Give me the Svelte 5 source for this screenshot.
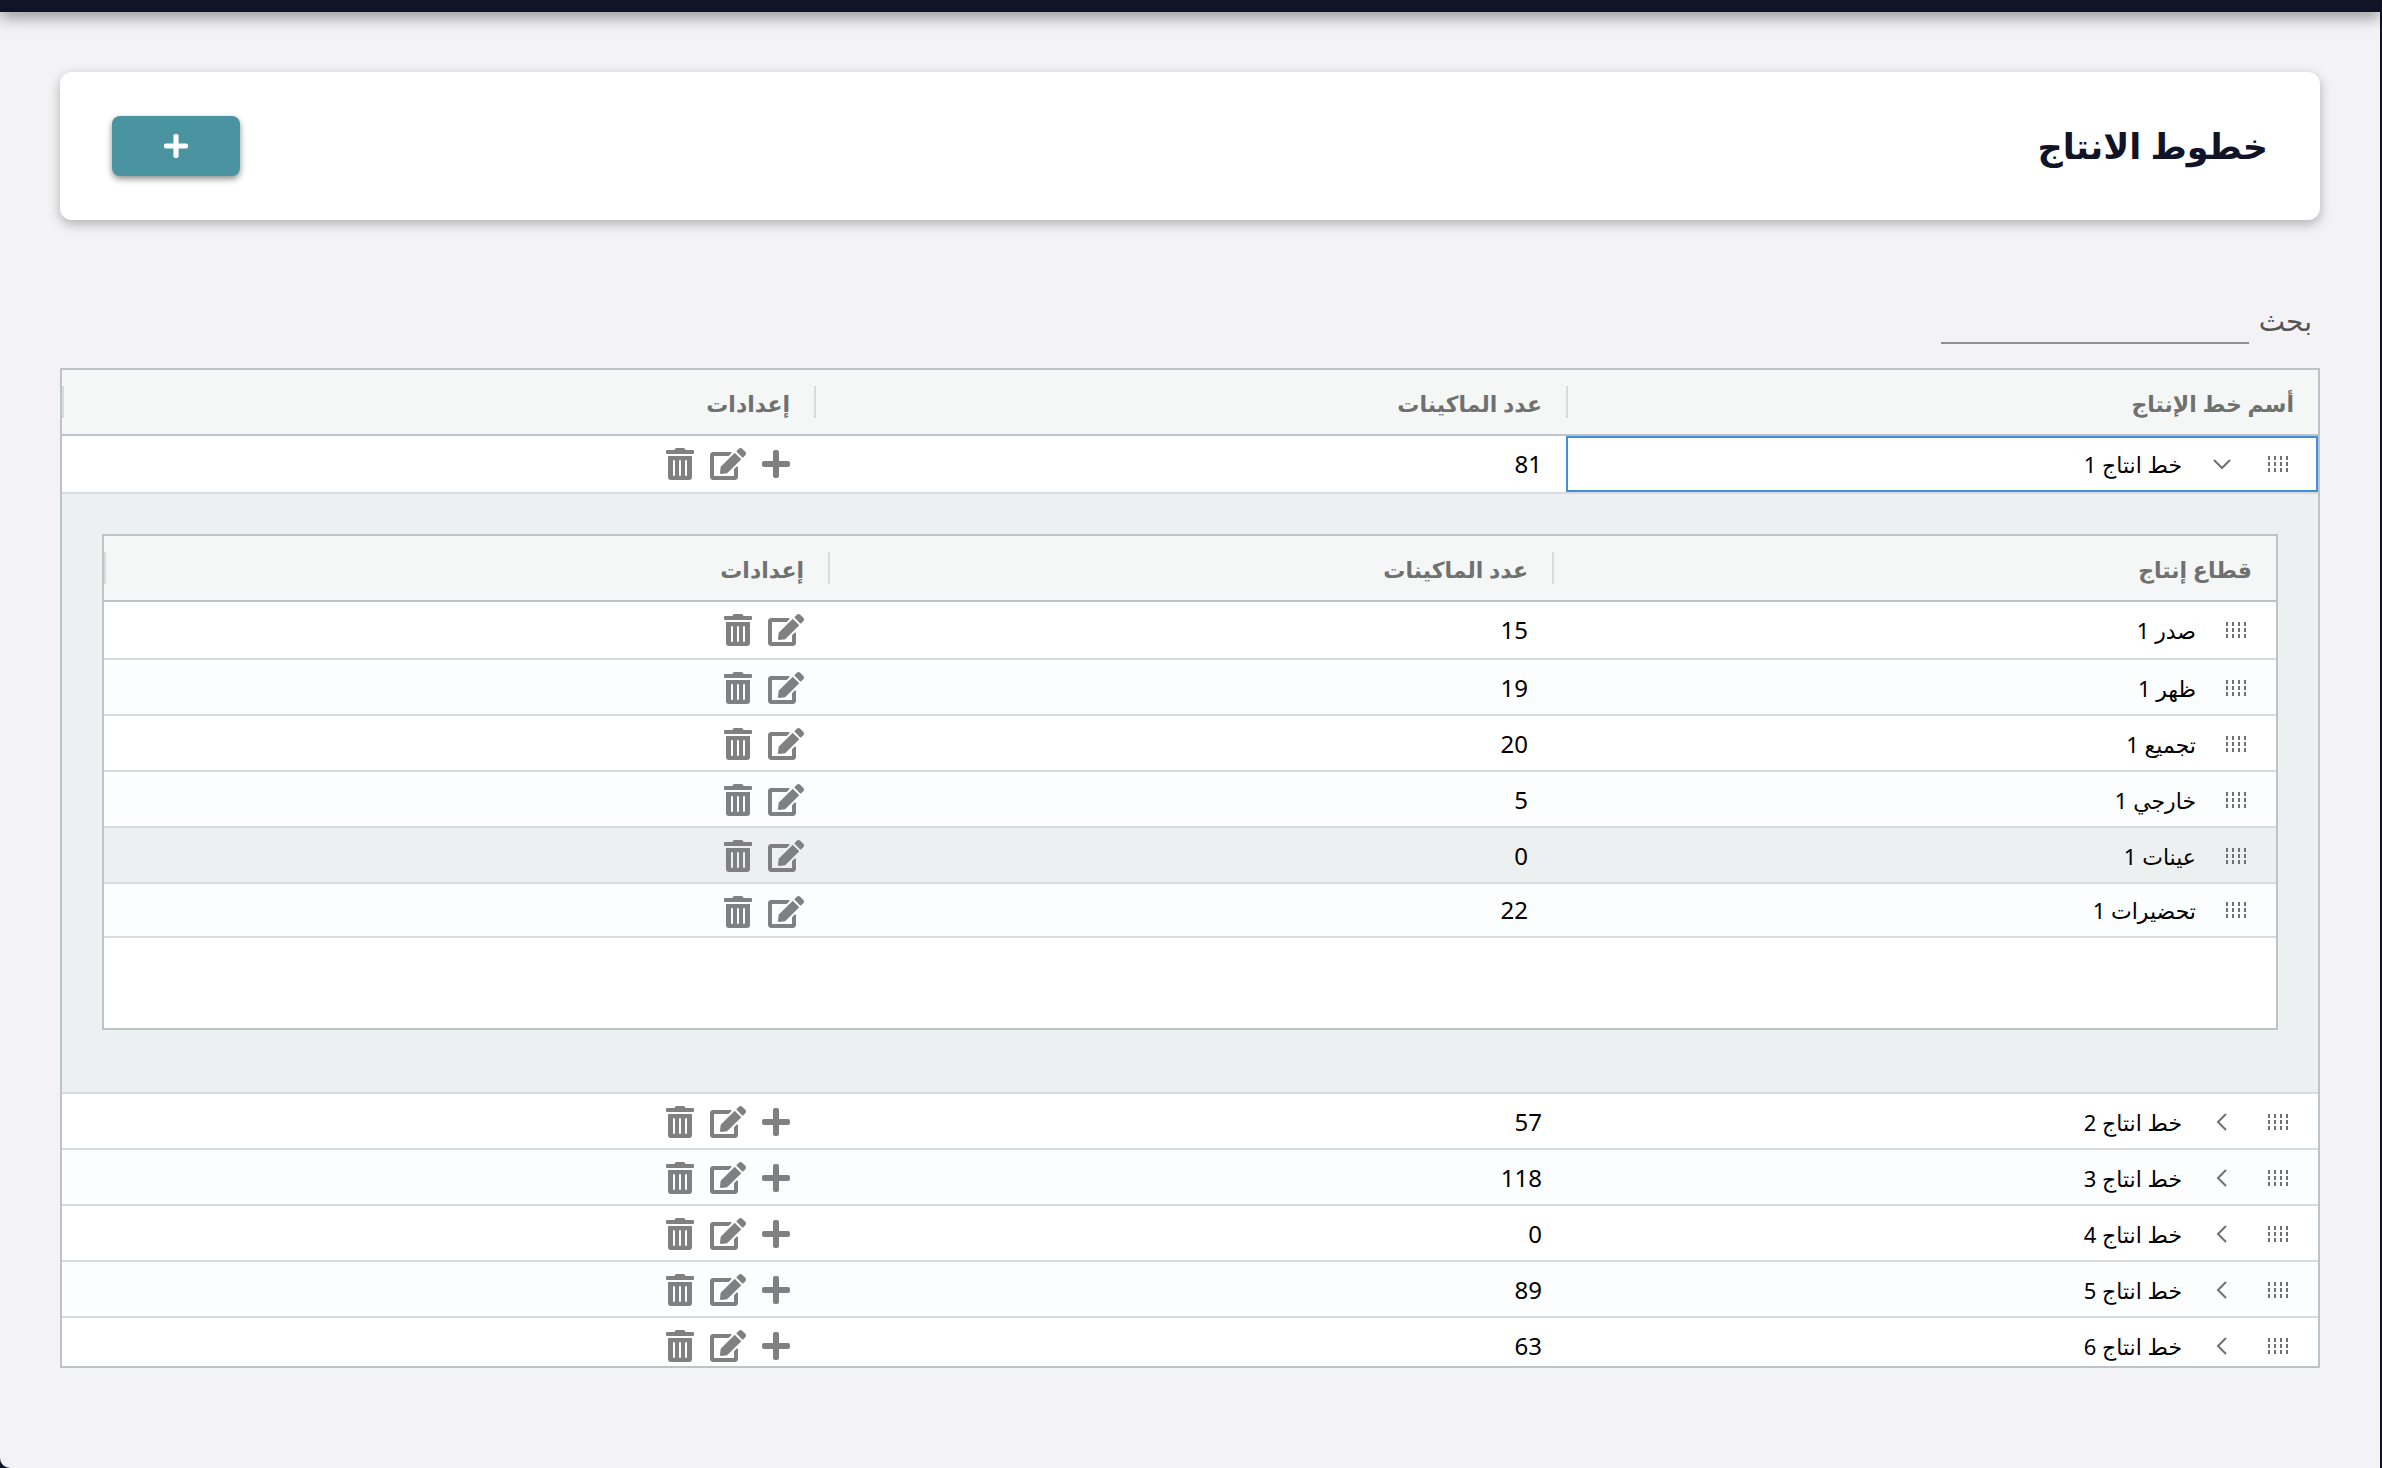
<script>
    let search = '';

    const lines = [
        { id: 1, name: 'خط انتاج 1', machines: 81, open: true, focused: true },
        { id: 2, name: 'خط انتاج 2', machines: 57 },
        { id: 3, name: 'خط انتاج 3', machines: 118 },
        { id: 4, name: 'خط انتاج 4', machines: 0 },
        { id: 5, name: 'خط انتاج 5', machines: 89 },
        { id: 6, name: 'خط انتاج 6', machines: 63 }
    ];

    const sectors = [
        { name: 'صدر 1', machines: 15 },
        { name: 'ظهر 1', machines: 19 },
        { name: 'تجميع 1', machines: 20 },
        { name: 'خارجي 1', machines: 5 },
        { name: 'عينات 1', machines: 0, hover: true },
        { name: 'تحضيرات 1', machines: 22 }
    ];

    const lineColumns = ['أسم خط الإنتاج', 'عدد الماكينات', 'إعدادات'];
    const sectorColumns = ['قطاع إنتاج', 'عدد الماكينات', 'إعدادات'];

    // Icon shapes, all 512 units high
    const icons = {
        plus: {
            width: 448,
            path: 'M416 208H272V64c0-17.67-14.33-32-32-32h-32c-17.67 0-32 14.33-32 32v144H32c-17.67 0-32 14.33-32 32v32c0 17.67 14.33 32 32 32h144v144c0 17.67 14.33 32 32 32h32c17.67 0 32-14.33 32-32V304h144c17.67 0 32-14.33 32-32v-32c0-17.67-14.33-32-32-32z'
        },
        edit: {
            width: 576,
            path: 'M402.6 83.2l90.2 90.2c3.8 3.8 3.8 10 0 13.8L274.4 405.6l-92.8 10.3c-12.4 1.4-22.9-9.1-21.5-21.5l10.3-92.8L388.8 83.2c3.8-3.8 10-3.8 13.8 0zm162-22.9l-48.8-48.8c-15.2-15.2-39.9-15.2-55.2 0l-35.4 35.4c-3.8 3.8-3.8 10 0 13.8l90.2 90.2c3.8 3.8 10 3.8 13.8 0l35.4-35.4c15.2-15.3 15.2-40 0-55.2zM384 346.2V448H64V128h229.8c3.2 0 6.2-1.3 8.5-3.5l40-40c7.6-7.6 2.2-20.5-8.5-20.5H48C21.5 64 0 85.5 0 112v352c0 26.5 21.5 48 48 48h352c26.5 0 48-21.5 48-48V306.2c0-10.7-12.9-16-20.5-8.5l-40 40c-2.2 2.3-3.5 5.3-3.5 8.5z'
        },
        trash: {
            width: 448,
            path: 'M32 464a48 48 0 0 0 48 48h288a48 48 0 0 0 48-48V128H32zm272-256a16 16 0 0 1 32 0v224a16 16 0 0 1-32 0zm-96 0a16 16 0 0 1 32 0v224a16 16 0 0 1-32 0zm-96 0a16 16 0 0 1 32 0v224a16 16 0 0 1-32 0zM432 32H312l-9.4-18.7A24 24 0 0 0 281.1 0H166.8a23.72 23.72 0 0 0-21.4 13.3L136 32H16A16 16 0 0 0 0 48v32a16 16 0 0 0 16 16h416a16 16 0 0 0 16-16V48a16 16 0 0 0-16-16z'
        }
    };

    const lineActions = [['plus', 'إضافة'], ['edit', 'تعديل'], ['trash', 'حذف']];
    const sectorActions = lineActions.slice(1);

    let rows = lines;

    function toggleLine(line) {
        line.open = !line.open;
        rows = rows;
    }
</script>

{#snippet icon(name)}
    <svg class="icon" viewBox="0 0 {icons[name].width} 512" aria-hidden="true">
        <path d={icons[name].path} />
    </svg>
{/snippet}

{#snippet dragHandle()}
    <svg class="drag" viewBox="0 0 20 16" aria-hidden="true">
        {#each [0, 6, 12] as y}
            <path d="M0 {y}h2v4h-2zM6 {y}h2v4h-2zM12 {y}h2v4h-2zM18 {y}h2v4h-2z" />
        {/each}
    </svg>
{/snippet}

{#snippet header(columns)}
    <thead>
        <tr>
            {#each columns as column}
                <th scope="col"><div class="heading">{column}</div></th>
            {/each}
        </tr>
    </thead>
{/snippet}

{#snippet actionCell(actions)}
    <td class="settings">
        <div class="actions">
            {#each actions as [name, label]}
                <button class="action" aria-label={label}>{@render icon(name)}</button>
            {/each}
        </div>
    </td>
{/snippet}

<div class="page" dir="rtl" lang="ar">
    <div class="topbar"></div>

    <main>
        <header class="card">
            <h1>خطوط الانتاج</h1>
            <button class="add" aria-label="إضافة">{@render icon('plus')}</button>
        </header>

        <div class="search">
            <label for="search">بحث</label>
            <input id="search" type="text" bind:value={search} />
        </div>

        <div class="grid">
            <table>
                {@render header(lineColumns)}
                <tbody>
                    {#each rows as line, i}
                        <tr class:first={i === 0} class:odd={i % 2 === 0 && i > 0}>
                            <td class:focused={line.focused}>
                                <div class="name">
                                    {@render dragHandle()}
                                    <button class="toggle" aria-label={line.name} aria-expanded={!!line.open} on:click={() => toggleLine(line)}>
                                        <svg viewBox="0 0 20 20" aria-hidden="true">
                                            <path d={line.open ? 'M2 6l8 8 8-8' : 'M14 2l-8 8 8 8'} />
                                        </svg>
                                    </button>
                                    <span>{line.name}</span>
                                </div>
                            </td>
                            <td>{line.machines}</td>
                            {@render actionCell(lineActions)}
                        </tr>
                        {#if line.open}
                            <tr>
                                <td class="detail" colspan="3">
                                    <div class="grid nested">
                                        <table>
                                            {@render header(sectorColumns)}
                                            <tbody>
                                                {#each sectors as sector, j}
                                                    <tr class:first={j === 0} class:odd={j % 2 === 1} class:hover={sector.hover} class:last={j === sectors.length - 1}>
                                                        <td>
                                                            <div class="name">
                                                                {@render dragHandle()}
                                                                <span>{sector.name}</span>
                                                            </div>
                                                        </td>
                                                        <td>{sector.machines}</td>
                                                        {@render actionCell(sectorActions)}
                                                    </tr>
                                                {/each}
                                            </tbody>
                                        </table>
                                    </div>
                                </td>
                            </tr>
                        {/if}
                    {/each}
                </tbody>
            </table>
        </div>
    </main>
</div>

<style>
    :global(body) {
        background-color: #111327;
    }

    .page {
        display: flex;
        flex-direction: column;
        box-sizing: border-box;
        height: 100vh;
        margin-right: 2px;
        background-color: #f3f3f6;
        border-bottom-left-radius: 10px;
        font-family: "Noto Sans", "DejaVu Sans", sans-serif;
        font-size: 24px;
        color: #000;
    }

    .topbar {
        flex: none;
        height: 12px;
        background-color: #111327;
        box-shadow: 0 4px 16px rgba(0, 0, 0, 0.5);
    }

    main {
        flex: 1;
        min-height: 0;
        display: flex;
        flex-direction: column;
        padding: 60px 60px 100px;
    }

    button {
        padding: 0;
        border: none;
        background: none;
        cursor: pointer;
    }

    .icon {
        display: block;
        height: 32px;
        fill: currentColor;
    }

    .card {
        flex: none;
        display: flex;
        align-items: center;
        justify-content: space-between;
        box-sizing: border-box;
        height: 148px;
        padding: 0 52px;
        background-color: #fff;
        border-radius: 12px;
        box-shadow: 0 4px 12px rgba(0, 0, 0, 0.28);
    }

    h1 {
        margin: 0;
        font-size: 35px;
        line-height: 48px;
        color: #111327;
    }

    .add {
        display: flex;
        align-items: center;
        justify-content: center;
        width: 128px;
        height: 60px;
        border-radius: 8px;
        background-color: #4a93a1;
        box-shadow: 0 3px 6px rgba(0, 0, 0, 0.45);
        color: #fff;
    }

    .add .icon {
        width: 24px;
        height: 28px;
    }

    .search {
        flex: none;
        display: flex;
        align-items: center;
        gap: 10px;
        padding: 76px 8px 24px;
        font-size: 28px;
        line-height: 48px;
        color: #555;
    }

    .search input {
        box-sizing: border-box;
        width: 308px;
        height: 48px;
        padding: 0;
        border: none;
        border-bottom: 2px solid #8f9193;
        background: none;
        font: inherit;
        outline: none;
    }

    .grid {
        flex: 1;
        min-height: 0;
        border: 2px solid #bdc3c7;
        background-color: #fff;
        overflow: auto;
        scrollbar-width: none;
    }

    .nested {
        box-sizing: border-box;
        min-height: 496px;
    }

    table {
        width: 100%;
        table-layout: fixed;
        border-collapse: separate;
        border-spacing: 0;
    }

    th {
        padding: 16px 0;
        border-bottom: 2px solid #bdc3c7;
        background-color: #f5f7f7;
        text-align: right;
        font-size: 22px;
        font-weight: bold;
        color: #6f7171;
    }

    .heading {
        height: 32px;
        padding-right: 24px;
        border-left: 2px solid #d9dcde;
        line-height: 34px;
    }

    td {
        box-sizing: border-box;
        height: 56px;
        padding: 2px 24px 0;
        border-bottom: 2px solid #d9dcde;
        line-height: 32px;
    }

    .first td {
        height: 58px;
        padding-top: 0;
    }

    .last td {
        height: 54px;
        padding-top: 0;
    }

    td.settings {
        padding-top: 12px;
        vertical-align: top;
    }

    .odd {
        background-color: #fcfdfe;
    }

    .hover {
        background-color: #ecf0f1;
    }

    .focused {
        box-shadow: inset 0 0 0 2px #3f8fe0;
    }

    .name {
        display: flex;
        align-items: center;
        padding-right: 6px;
        font-size: 22px;
    }

    .drag {
        flex: none;
        width: 20px;
        height: 16px;
        margin-left: 30px;
        fill: #6f7171;
    }

    .toggle {
        flex: none;
        width: 20px;
        height: 20px;
        margin-right: 6px;
        margin-left: 30px;
    }

    .toggle svg {
        display: block;
        fill: none;
        stroke: #6f7171;
        stroke-width: 2;
    }

    .actions {
        display: flex;
        gap: 16px;
    }

    .action {
        color: #808080;
    }

    td.detail {
        height: auto;
        padding: 40px 40px 62px;
        background-color: #ecf0f1;
    }
</style>
